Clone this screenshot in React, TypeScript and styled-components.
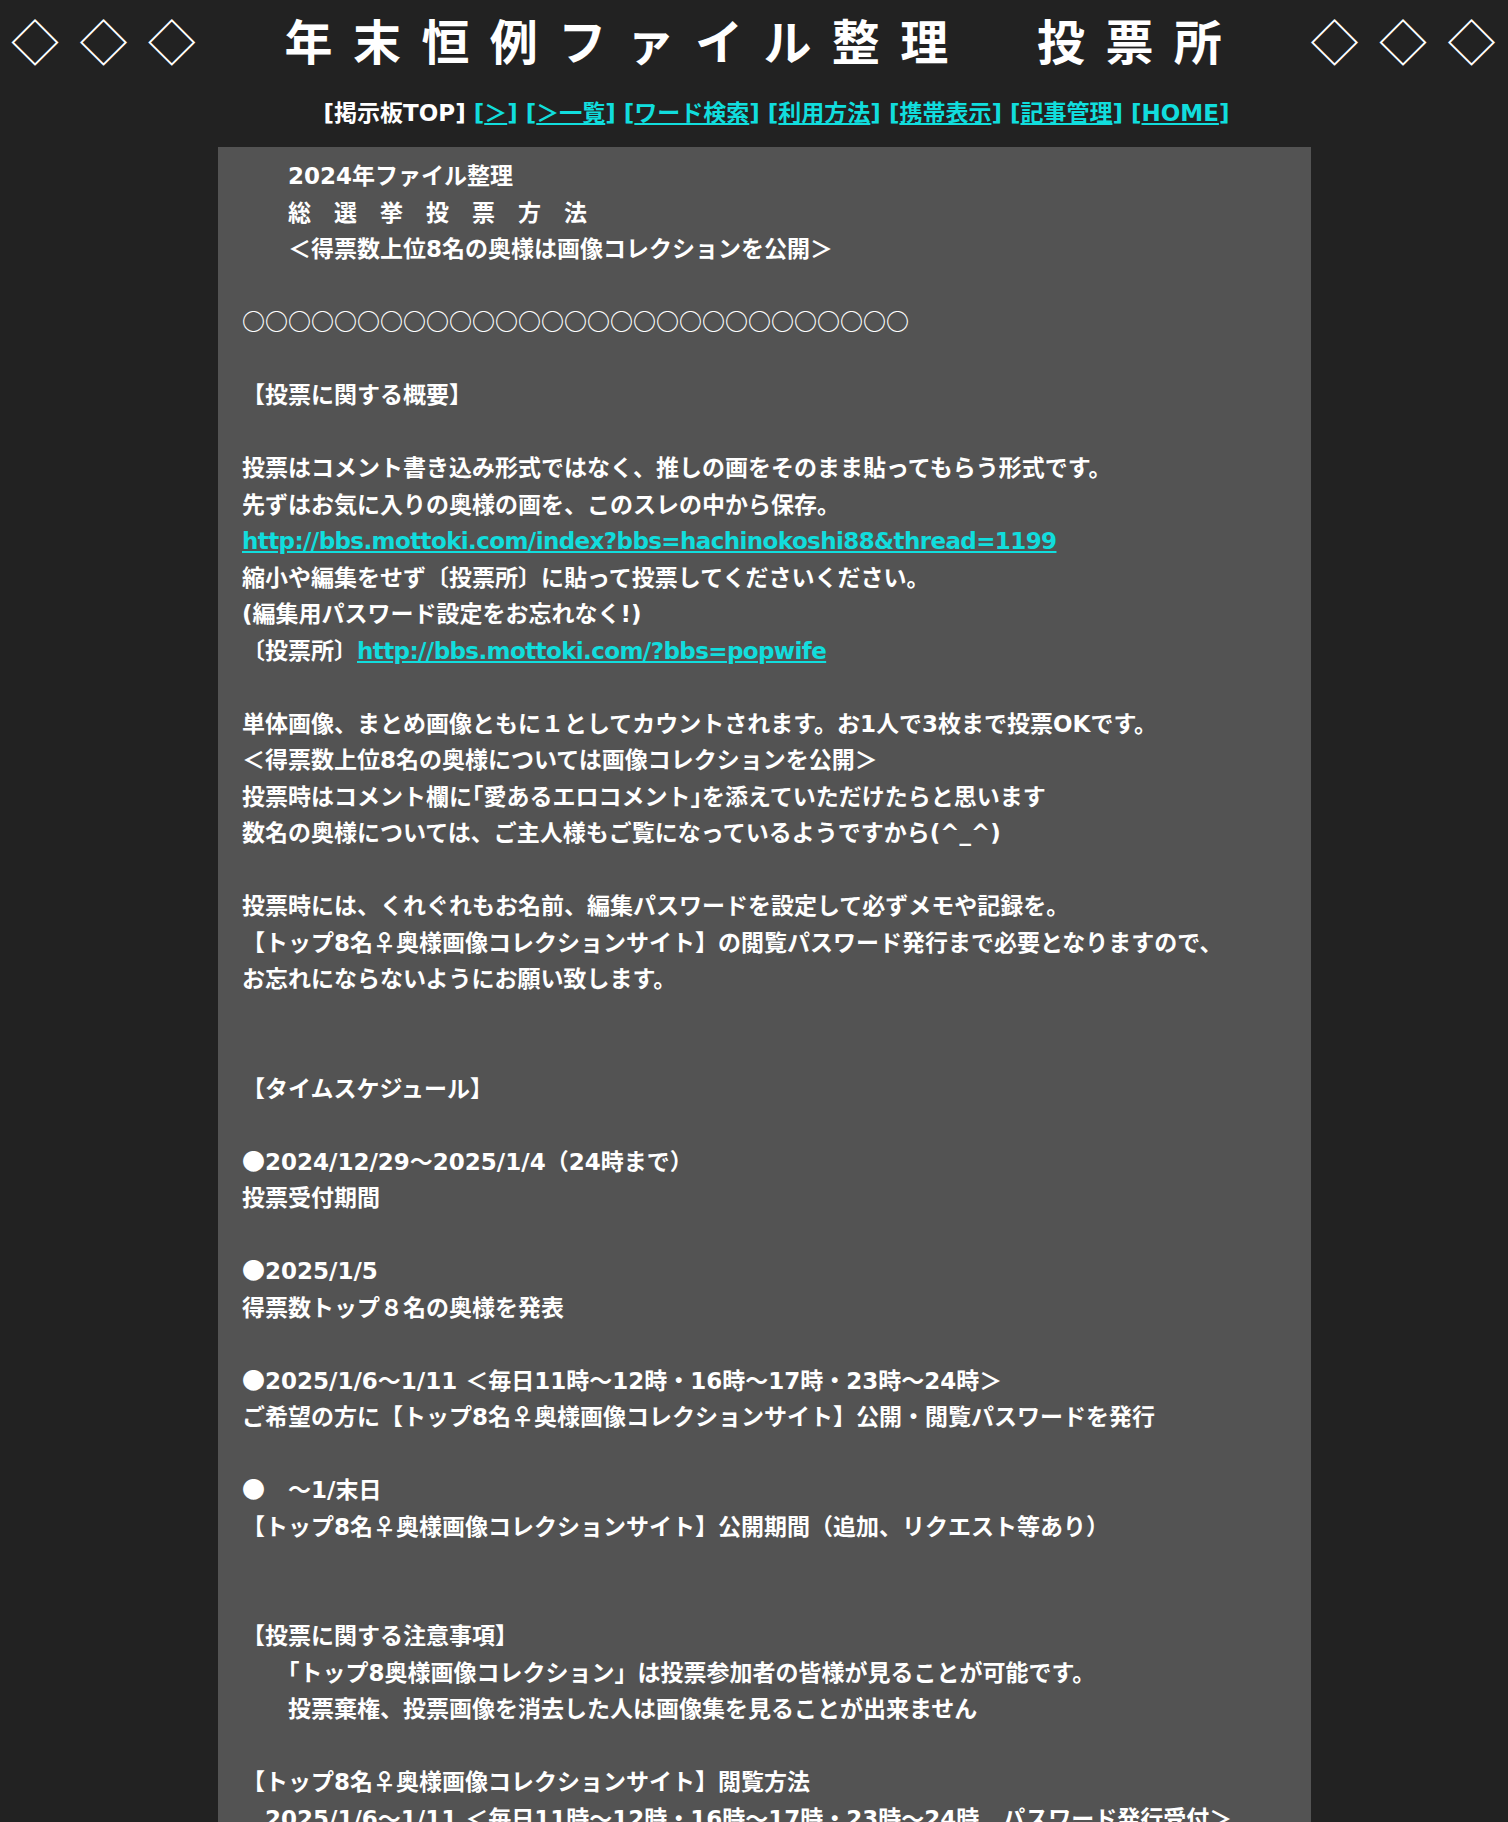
import React from "react";
import styled, { createGlobalStyle } from "styled-components";

const Global = createGlobalStyle`
  html, body {
    margin: 0;
    padding: 0;
    background: #222222;
  }
  body {
    font-family: "DejaVu Sans", "Noto Sans CJK JP", sans-serif;
    color: #ffffff;
  }
`;

const Page = styled.div`
  min-height: 1822px;
  background: #222222;
  overflow: hidden;
`;

const Title = styled.h1`
  margin: 0;
  padding-left: 11px;
  font-family: "Noto Sans CJK JP", sans-serif;
  font-size: 48px;
  font-weight: 700;
  letter-spacing: 20.4px;
  line-height: 79px;
  white-space: nowrap;
  color: #ffffff;
`;

const Diamonds = styled.span`
  font-weight: 400;
`;

const Nav = styled.nav`
  padding: 14px 0 0 45px;
  margin-bottom: 14px;
  text-align: center;
  font-size: 23px;
  font-weight: 700;
  line-height: 40px;
  white-space: nowrap;
  color: #ffffff;
`;

const NavItem = styled.span`
  color: #11dddd;
`;

const NavLink = styled.a`
  color: #11dddd;
  text-decoration: underline;
`;

const Board = styled.main`
  margin-left: 218px;
  width: 1093px;
  box-sizing: border-box;
  background: #535353;
  padding: 11px 24px 60px;
  font-size: 23px;
  font-weight: 700;
  line-height: 36.5px;
  color: #ffffff;
`;

const Line = styled.div`
  white-space: pre;
  height: 36.5px;
`;

const Sym = styled.span`
  font-family: "Noto Sans CJK JP", sans-serif;
  line-height: 1;
`;

const Link = styled.a`
  color: #11dddd;
  text-decoration: underline;
  letter-spacing: -0.6px;
`;

const navItems = ["＞", "＞一覧", "ワード検索", "利用方法", "携帯表示", "記事管理", "HOME"];

type Row = string | { before?: string; href: string };

const rows: Row[] = [
  "　　2024年ファイル整理",
  "　　総　選　挙　投　票　方　法",
  "　　＜得票数上位8名の奥様は画像コレクションを公開＞",
  "",
  "○○○○○○○○○○○○○○○○○○○○○○○○○○○○○",
  "",
  "【投票に関する概要】",
  "",
  "投票はコメント書き込み形式ではなく、推しの画をそのまま貼ってもらう形式です。",
  "先ずはお気に入りの奥様の画を、このスレの中から保存。",
  { href: "http://bbs.mottoki.com/index?bbs=hachinokoshi88&thread=1199" },
  "縮小や編集をせず〔投票所〕に貼って投票してくださいください。",
  "(編集用パスワード設定をお忘れなく!)",
  { before: "〔投票所〕", href: "http://bbs.mottoki.com/?bbs=popwife" },
  "",
  "単体画像、まとめ画像ともに１としてカウントされます。お1人で3枚まで投票OKです。",
  "＜得票数上位8名の奥様については画像コレクションを公開＞",
  "投票時はコメント欄に｢愛あるエロコメント｣を添えていただけたらと思います",
  "数名の奥様については、ご主人様もご覧になっているようですから(^_^)",
  "",
  "投票時には、くれぐれもお名前、編集パスワードを設定して必ずメモや記録を。",
  "【トップ8名♀奥様画像コレクションサイト】の閲覧パスワード発行まで必要となりますので、",
  "お忘れにならないようにお願い致します。",
  "",
  "",
  "【タイムスケジュール】",
  "",
  "●2024/12/29～2025/1/4（24時まで）",
  "投票受付期間",
  "",
  "●2025/1/5",
  "得票数トップ８名の奥様を発表",
  "",
  "●2025/1/6～1/11 ＜毎日11時～12時・16時～17時・23時～24時＞",
  "ご希望の方に【トップ8名♀奥様画像コレクションサイト】公開・閲覧パスワードを発行",
  "",
  "●　～1/末日",
  "【トップ8名♀奥様画像コレクションサイト】公開期間（追加、リクエスト等あり）",
  "",
  "",
  "【投票に関する注意事項】",
  "　　「トップ8奥様画像コレクション」は投票参加者の皆様が見ることが可能です。",
  "　　投票棄権、投票画像を消去した人は画像集を見ることが出来ません",
  "",
  "【トップ8名♀奥様画像コレクションサイト】閲覧方法",
  "　2025/1/6～1/11 ＜毎日11時～12時・16時～17時・23時～24時　パスワード発行受付＞",
  "　パスワード発行後、サイトにて閲覧可能となります。",
  "",
];

function withSymbols(text: string) {
  return text.split(/([●○♀]+)/).map((part, i) =>
    i % 2 === 1 ? <Sym key={i}>{part}</Sym> : <React.Fragment key={i}>{part}</React.Fragment>
  );
}

export default function App() {
  return (
    <Page>
      <Global />
      <Title>
        <Diamonds>◇◇◇</Diamonds>　年末恒例ファイル整理　投票所　<Diamonds>◇◇◇</Diamonds>
      </Title>
      <Nav>
        [掲示板TOP]
        {navItems.map((item) => (
          <React.Fragment key={item}>
            {" "}
            <NavItem>
              [<NavLink href="#">{item}</NavLink>]
            </NavItem>
          </React.Fragment>
        ))}
      </Nav>
      <Board>
        {rows.map((row, i) =>
          typeof row === "string" ? (
            <Line key={i}>{withSymbols(row)}</Line>
          ) : (
            <Line key={i}>
              {row.before}
              <Link href="#">{row.href}</Link>
            </Line>
          )
        )}
      </Board>
    </Page>
  );
}
